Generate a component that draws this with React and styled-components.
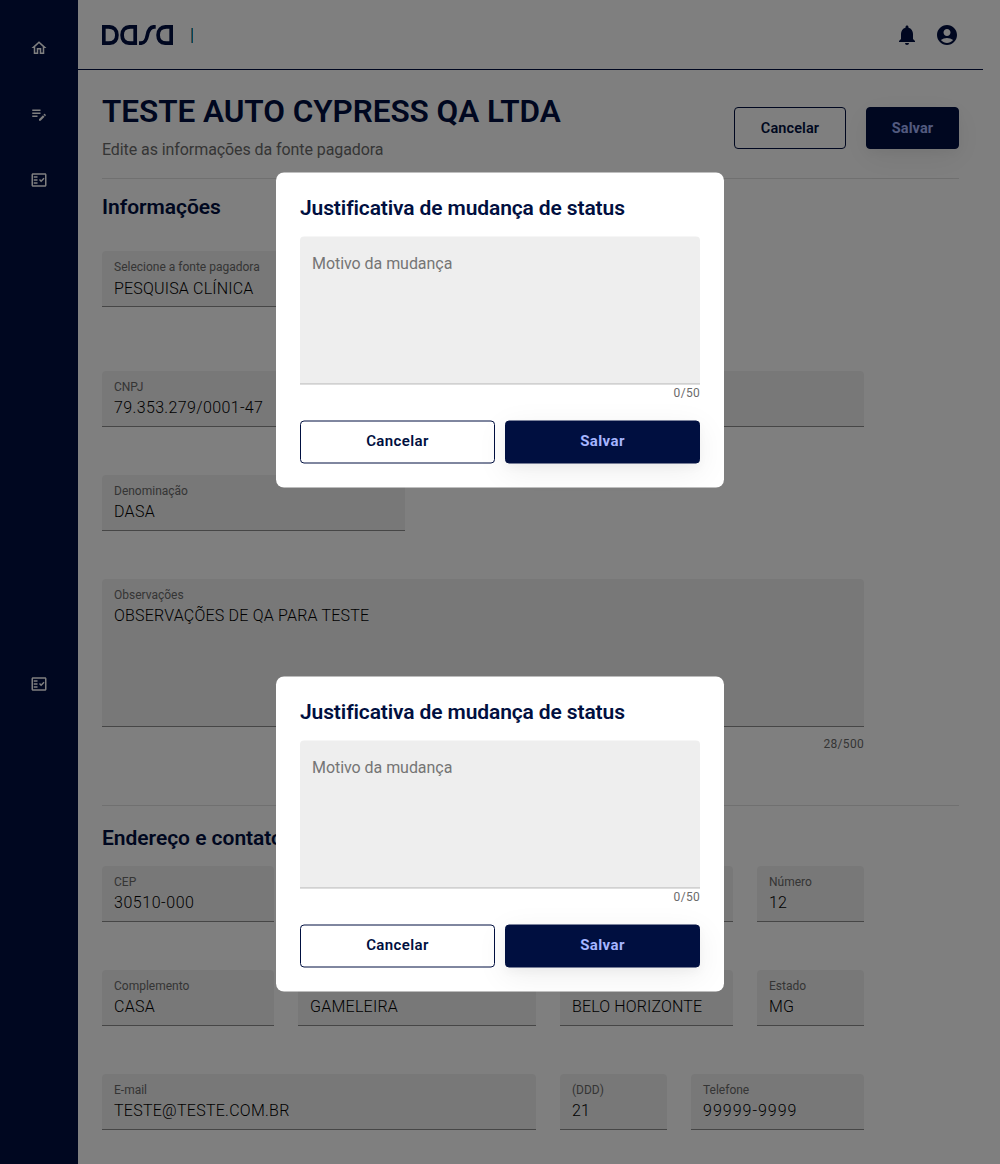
import React from "react";
import styled, { createGlobalStyle } from "styled-components";
import {
  MdAccountCircle,
  MdEditNote,
  MdNotifications,
  MdOutlineFactCheck,
  MdOutlineHome,
} from "react-icons/md";

const navy = "#000f40";

const GlobalStyle = createGlobalStyle`
  * { box-sizing: border-box; }
  body {
    margin: 0;
    background: #fff;
    font-family: Roboto, "Liberation Sans", sans-serif;
  }
`;

const Page = styled.div`
  display: flex;
  height: 1164px;
  overflow: hidden;
  background: #fff;
`;

const Sidebar = styled.nav`
  display: flex;
  flex-direction: column;
  align-items: center;
  width: 78px;
  padding-top: 39px;
  background: ${navy};
  color: #fff;
`;

const NavItem = styled.a`
  display: flex;
  width: 18px;
  height: 18px;
  font-size: 18px;
  margin-bottom: ${({ $gap }) => $gap}px;
`;

const Main = styled.div`
  width: 905px;
`;

const Header = styled.header`
  display: flex;
  align-items: center;
  height: 70px;
  padding: 0 24px;
  border-bottom: 1px solid ${navy};
  color: ${navy};
`;

const LogoDivider = styled.span`
  width: 2px;
  height: 15px;
  margin: 1px auto 0 18px;
  background: linear-gradient(90deg, #a39a86 50%, #008cc0 50%);
`;

const HeaderIcon = styled.button`
  display: flex;
  margin: 1px 0 0 16px;
  padding: 0;
  border: 0;
  background: none;
  color: inherit;
  font-size: 24px;
`;

const Content = styled.main`
  padding: 24px 24px 0;
`;

const TitleRow = styled.div`
  display: flex;
  justify-content: space-between;
  height: 85px;
  border-bottom: 1px solid #e0e0e0;
`;

const Title = styled.h1`
  margin: 0;
  padding-top: 1px;
  color: ${navy};
  font-size: 31.5px;
  font-weight: 600;
  line-height: 34px;
  letter-spacing: -0.05px;
  white-space: nowrap;
`;

const Subtitle = styled.p`
  margin: 11px 0 0;
  color: #6b6b6b;
  font-size: 16px;
  line-height: 20px;
  letter-spacing: -0.08px;
`;

const TitleActions = styled.div`
  display: flex;
  gap: 20px;
  padding-top: 13px;
`;

const Button = styled.button`
  height: ${({ $height }) => $height || 42}px;
  width: ${({ $width }) => ($width ? `${$width}px` : "auto")};
  flex: ${({ $grow }) => ($grow ? "1 1 0" : "none")};
  padding: 0 0 ${({ $lift }) => $lift || 0}px;
  border: 1px solid ${navy};
  border-radius: 4px;
  background: ${({ $primary }) => ($primary ? navy : "transparent")};
  box-shadow: ${({ $primary }) =>
    $primary ? "0 8px 32px rgba(0, 0, 0, 0.07), 0 4px 10px rgba(0, 0, 0, 0.03)" : "none"};
  color: ${({ $primary }) => ($primary ? "#a6b5ff" : navy)};
  font-family: inherit;
  font-size: ${({ $size }) => $size || 14.5}px;
  font-weight: ${({ $primary }) => ($primary ? 700 : 600)};
  letter-spacing: ${({ $track }) => $track || 0.1}px;
`;

const SectionTitle = styled.h2`
  margin: 0;
  padding-top: ${({ $top }) => $top}px;
  height: ${({ $height }) => $height}px;
  color: ${navy};
  font-size: 21px;
  font-weight: 600;
  line-height: 22px;
  letter-spacing: -0.03px;
`;

const Form = styled.div`
  width: 762px;
`;

const Row = styled.div`
  display: grid;
  grid-template-columns: ${({ $columns }) => $columns};
  column-gap: 24px;
  margin-bottom: ${({ $gap }) => ($gap === undefined ? 48 : $gap)}px;
`;

const FieldBox = styled.div`
  display: flex;
  flex-direction: column;
  height: ${({ $height }) => $height || 56}px;
  padding: 8px 12px 0;
  border-bottom: 1px solid rgba(0, 0, 0, 0.42);
  border-radius: 4px 4px 0 0;
  background: rgba(0, 0, 0, 0.06);
`;

const FieldLabel = styled.label`
  height: 18px;
  color: #6b6b6b;
  font-size: 12px;
  line-height: 16px;
`;

const FieldValue = styled.span`
  color: #000;
  font-size: 16px;
  font-weight: 300;
  line-height: 21px;
  letter-spacing: ${({ $track }) => $track || 0.05}px;
  padding: ${({ $select }) => ($select ? "1px 0 0" : "0")};
  white-space: nowrap;
`;

const Counter = styled.div`
  color: #6b6b6b;
  font-size: 12px;
  line-height: 16px;
  letter-spacing: 0.3px;
  text-align: right;
`;

const Divider = styled.hr`
  width: 857px;
  height: 1px;
  margin: 53px 0 0;
  border: 0;
  background: #e0e0e0;
`;

const Overlay = styled.div`
  position: fixed;
  inset: 0;
  display: flex;
  flex-direction: column;
  align-items: center;
  gap: 189px;
  padding-top: 172px;
  background: rgba(0, 0, 0, 0.5);
`;

const Dialog = styled.section`
  width: 448px;
  height: 315px;
  flex: none;
  padding: 24px;
  border-radius: 8px;
  background: #fff;
  transform: translateY(0.5px);
`;

const DialogTitle = styled.h2`
  margin: 0 0 17px;
  color: ${navy};
  font-size: 21px;
  font-weight: 600;
  line-height: 23px;
  letter-spacing: -0.12px;
`;

const ReasonBox = styled.div`
  height: 148px;
  padding: 17px 12px;
  border-bottom: 1px solid #7c7c7c;
  border-radius: 4px 4px 0 0;
  background: #eee;
  color: #757575;
  font-size: 16px;
  line-height: 20px;
  letter-spacing: -0.05px;
`;

const DialogActions = styled.div`
  display: flex;
  gap: 10px;
  margin-top: 20px;
`;

function Logo() {
  return (
    <svg width="71" height="20" viewBox="0 0 71 20" fill="none" stroke="currentColor" strokeWidth="3.7">
      <path d="M1.8 1.8V18.2H6.5C12 18.2 14.9 15.2 14.9 10S12 1.8 6.5 1.8Z" />
      <path d="M33.2 1.8V18.2H28.5C23 18.2 20.1 15.2 20.1 10S23 1.8 28.5 1.8Z" />
      <path d="M37 18.2H38.6C43 18.2 44.4 15.3 45.4 10S48 1.8 52.2 1.8H53.7" />
      <path d="M69.2 1.8V18.2H64.5C59 18.2 56.1 15.2 56.1 10S59 1.8 64.5 1.8Z" />
    </svg>
  );
}

function Field({ label, value, track, height, select }) {
  return (
    <FieldBox $height={height}>
      <FieldLabel>{label}</FieldLabel>
      <FieldValue $track={track} $select={select}>{value}</FieldValue>
    </FieldBox>
  );
}

function StatusDialog() {
  return (
    <Dialog role="dialog">
      <DialogTitle>Justificativa de mudança de status</DialogTitle>
      <ReasonBox>Motivo da mudança</ReasonBox>
      <Counter>0/50</Counter>
      <DialogActions>
        <Button $grow $height={43} $size={15} $track={0.4} $lift={4}>Cancelar</Button>
        <Button $grow $primary $height={43} $size={15} $track={0.4} $lift={4}>Salvar</Button>
      </DialogActions>
    </Dialog>
  );
}

export default function App() {
  return (
    <>
      <GlobalStyle />
      <Page>
        <Sidebar>
          <NavItem $gap={48}><MdOutlineHome /></NavItem>
          <NavItem $gap={48}><MdEditNote /></NavItem>
          <NavItem $gap={486}><MdOutlineFactCheck /></NavItem>
          <NavItem $gap={0}><MdOutlineFactCheck /></NavItem>
        </Sidebar>
        <Main>
          <Header>
            <Logo />
            <LogoDivider />
            <HeaderIcon><MdNotifications /></HeaderIcon>
            <HeaderIcon><MdAccountCircle /></HeaderIcon>
          </Header>
          <Content>
            <TitleRow>
              <div>
                <Title>TESTE AUTO CYPRESS QA LTDA</Title>
                <Subtitle>Edite as informações da fonte pagadora</Subtitle>
              </div>
              <TitleActions>
                <Button $width={112}>Cancelar</Button>
                <Button $width={93} $primary>Salvar</Button>
              </TitleActions>
            </TitleRow>
            <SectionTitle $top={17} $height={72}>Informações</SectionTitle>
            <Form>
              <Row $columns="303px" $gap={64}>
                <Field select label="Selecione a fonte pagadora" value="PESQUISA CLÍNICA" track={0.18} />
              </Row>
              <Row $columns="303px 1fr">
                <Field label="CNPJ" value="79.353.279/0001-47" track={0.36} />
                <FieldBox />
              </Row>
              <Row $columns="303px">
                <Field label="Denominação" value="DASA" track={0.3} />
              </Row>
              <Row $columns="1fr" $gap={9}>
                <Field label="Observações" value="OBSERVAÇÕES DE QA PARA TESTE" height={148} track={0.2} />
              </Row>
              <Counter>28/500</Counter>
            </Form>
            <Divider />
            <SectionTitle $top={21} $height={60}>Endereço e contato</SectionTitle>
            <Form>
              <Row $columns="172px 1fr 107px">
                <Field label="CEP" value="30510-000" track={0.55} />
                <FieldBox />
                <Field label="Número" value="12" />
              </Row>
              <Row $columns="172px 238px 173px 107px">
                <Field label="Complemento" value="CASA" track={0.3} />
                <Field value="GAMELEIRA" track={0.25} />
                <Field value="BELO HORIZONTE" track={0.15} />
                <Field label="Estado" value="MG" />
              </Row>
              <Row $columns="434px 107px 173px">
                <Field label="E-mail" value="TESTE@TESTE.COM.BR" track={0.26} />
                <Field label="(DDD)" value="21" />
                <Field label="Telefone" value="99999-9999" track={1} />
              </Row>
            </Form>
          </Content>
        </Main>
      </Page>
      <Overlay>
        <StatusDialog />
        <StatusDialog />
      </Overlay>
    </>
  );
}
